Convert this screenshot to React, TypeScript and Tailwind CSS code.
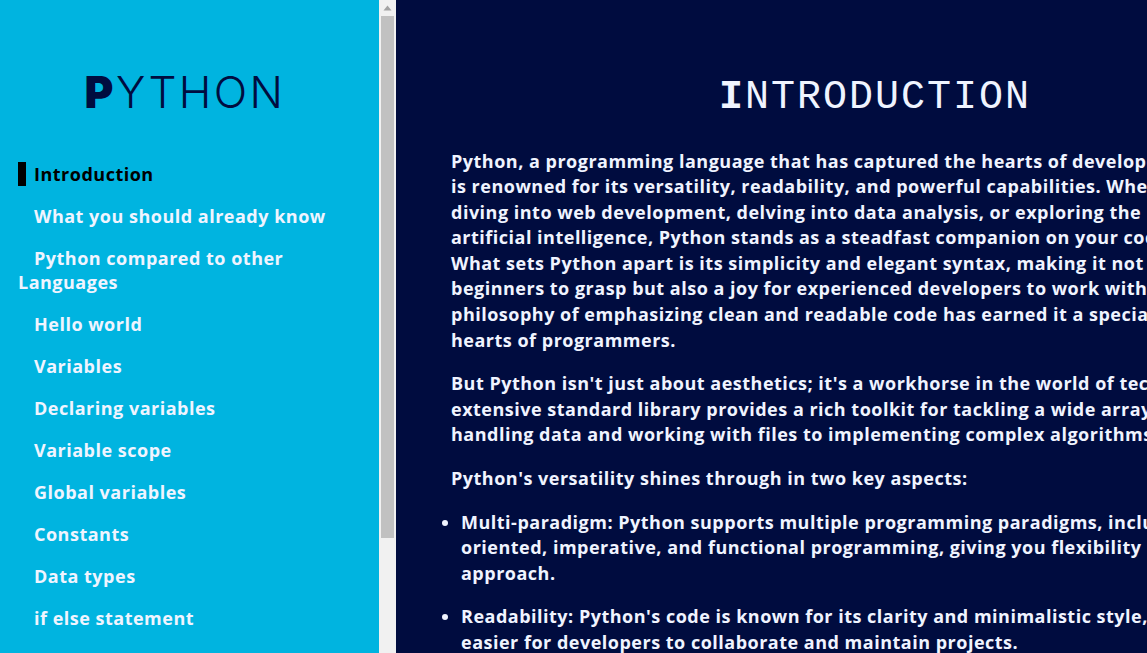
const nav = [
  "Introduction",
  "What you should already know",
  "Python compared to other Languages",
  "Hello world",
  "Variables",
  "Declaring variables",
  "Variable scope",
  "Global variables",
  "Constants",
  "Data types",
  "if else statement",
];

function Scrollbar() {
  return (
    <div className="w-[17px] h-full shrink-0 bg-[#f1f1f1] flex flex-col">
      <div className="h-4 flex items-center justify-center">
        <svg width="9" height="6" viewBox="0 0 9 6"><path d="M4.5 0.5 L8.5 5.5 L0.5 5.5 Z" fill="#a3a3a3" /></svg>
      </div>
      <div className="h-[522px] mx-[2px] bg-[#c1c1c1]" />
    </div>
  );
}

export default function App() {
  return (
    <div className="flex h-[653px] w-[1147px] overflow-hidden bg-[#000c3f] font-['Open_Sans',sans-serif]">
      <aside className="w-[379px] shrink-0 bg-[#00b4e0] overflow-hidden">
        <h2 className="pt-[66px] pr-[9px] h-[162px] text-center text-[44px] leading-[52px] tracking-[2.4px] font-['Inter',sans-serif] font-light text-[#000c3f] first-letter:font-black first-letter:[-webkit-text-stroke:3px_#000c3f]">
          PYTHON
        </h2>
        <ul className="pl-[18px] pr-4 text-[18px] leading-[24px] font-bold tracking-[0.5px] flex flex-col gap-[18px]">
          {nav.map((n, i) => (
            <li key={n} className={i === 0 ? "text-black" : "text-[#f0f4ff]"}>
              <span className={`inline-block w-2 h-6 mr-2 align-top ${i === 0 ? "bg-black" : ""}`} />
              {n}
            </li>
          ))}
        </ul>
      </aside>
      <Scrollbar />
      <main className="w-[958px] shrink-0 pl-[55px] pr-[55px] text-[#f0f4ff]">
        <h1 className="pt-[74px] h-[148.6px] text-center text-[40px] leading-[48px] tracking-[2px] font-['Liberation_Mono',monospace] font-normal first-letter:font-black first-letter:[-webkit-text-stroke:3px_#f0f4ff]">
          INTRODUCTION
        </h1>
        <div className="text-[18px] leading-[25.58px] font-bold tracking-[0.5px]">
          <p className="mb-[18.1px]">
            Python, a programming language that has captured the hearts of developers worldwide,<br />
            is renowned for its versatility, readability, and powerful capabilities. Whether you are<br />
            diving into web development, delving into data analysis, or exploring the realms of<br />
            artificial intelligence, Python stands as a steadfast companion on your coding journey.<br />
            What sets Python apart is its simplicity and elegant syntax, making it not only easy for<br />
            beginners to grasp but also a joy for experienced developers to work with. Its<br />
            philosophy of emphasizing clean and readable code has earned it a special place in the<br />
            hearts of programmers.
          </p>
          <p className="mb-[18.1px]">
            But Python isn't just about aesthetics; it's a workhorse in the world of technology. Its<br />
            extensive standard library provides a rich toolkit for tackling a wide array of tasks, from<br />
            handling data and working with files to implementing complex algorithms.
          </p>
          <p className="mb-[18.1px]">Python's versatility shines through in two key aspects:</p>
          <ul className="list-disc pl-[10px]">
            <li className="mb-[17.5px]">
              Multi-paradigm: Python supports multiple programming paradigms, including object-<br />
              oriented, imperative, and functional programming, giving you flexibility in your<br />
              approach.
            </li>
            <li>
              Readability: Python's code is known for its clarity and minimalistic style, making it<br />
              easier for developers to collaborate and maintain projects.
            </li>
          </ul>
        </div>
      </main>
    </div>
  );
}
